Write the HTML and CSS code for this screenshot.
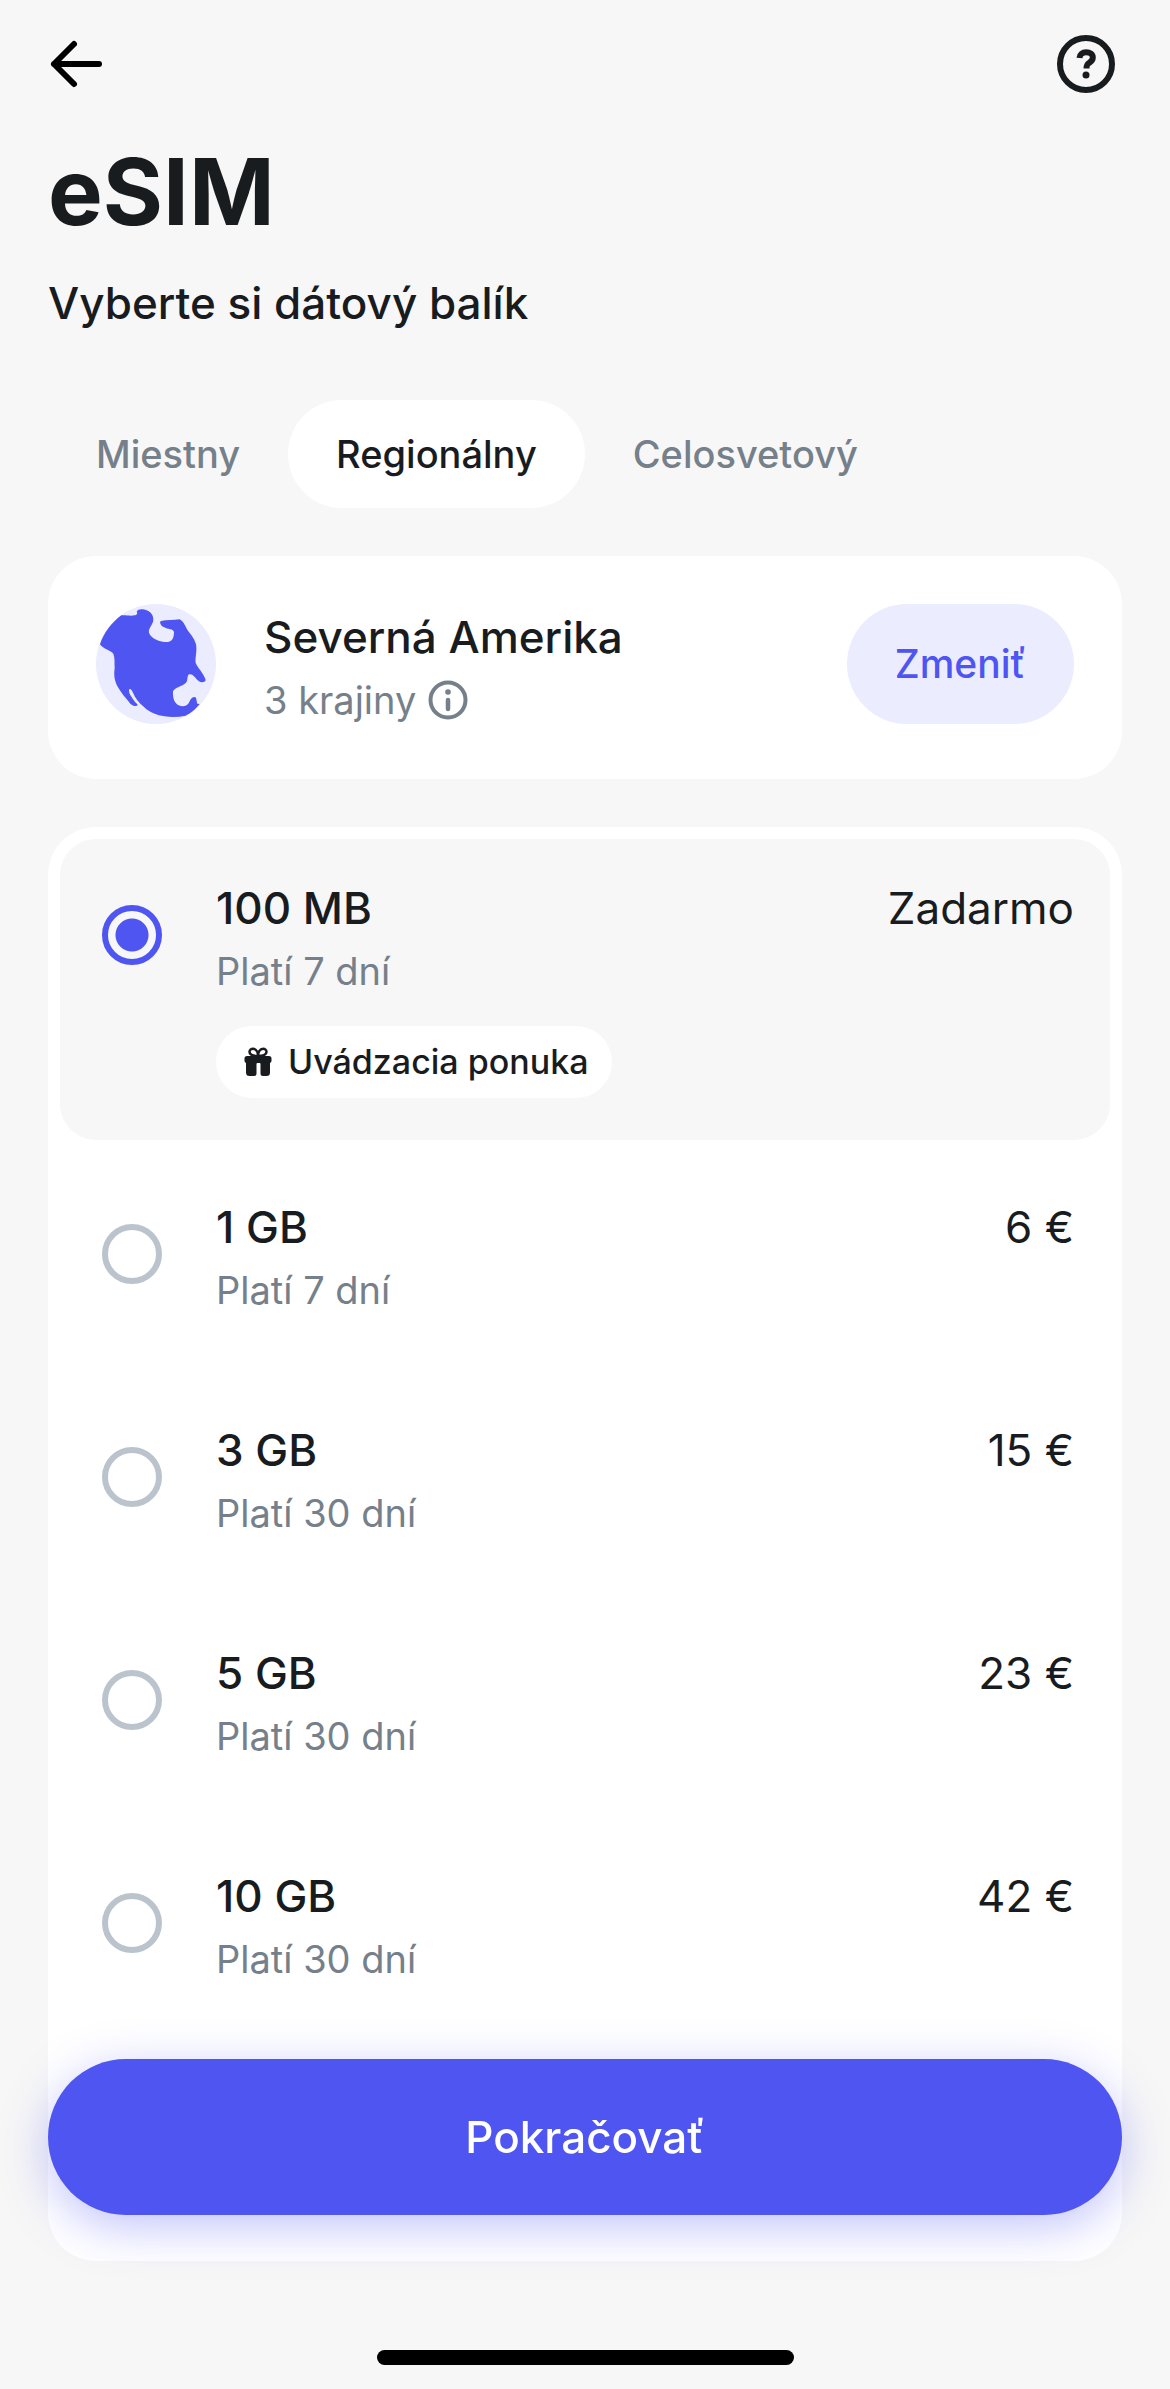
FILE: index.html
```html
<!DOCTYPE html>
<html lang="sk">
<head>
<meta charset="utf-8">
<meta name="viewport" content="width=device-width, initial-scale=1">
<title>eSIM</title>
<link rel="stylesheet" href="styles.css">
</head>
<body>
<main class="page">
  <nav class="topbar">
    <button class="icon-button" type="button" aria-label="Späť">
      <svg width="60" height="60" viewBox="0 0 60 60" fill="none" stroke="#000" stroke-width="6" stroke-linecap="round" stroke-linejoin="round"><path d="M51 30H6M26 10 6 30l20 20"/></svg>
    </button>
    <button class="icon-button" type="button" aria-label="Pomoc">
      <svg width="72" height="60" viewBox="0 0 72 60" fill="none"><circle cx="36" cy="30" r="26" stroke="#191c1f" stroke-width="6"/><path d="M29.500 24C29.700 20.300 32.400 18.300 36.200 18.300c3.900 0 6.600 2 6.600 5.200 0 2.600-1.400 3.900-3.300 5.100-2.200 1.300-3 2.300-3 6" stroke="#191c1f" stroke-width="6"/><circle cx="36" cy="41" r="3.500" fill="#191c1f"/></svg>
    </button>
  </nav>

  <h1 class="heading">eSIM</h1>
  <p class="subtitle">Vyberte si dátový balík</p>

  <div class="tabs" role="tablist">
    <button class="tab" type="button" role="tab" aria-selected="false">Miestny</button>
    <button class="tab tab-active" type="button" role="tab" aria-selected="true">Regionálny</button>
    <button class="tab" type="button" role="tab" aria-selected="false">Celosvetový</button>
  </div>

  <section class="card region">
    <svg class="globe" viewBox="48 42 360 360" aria-hidden="true"><circle cx="228" cy="222" r="180" fill="#ebecfd"/><path fill="#4f55f1" d="M60 163C72 127 95 98 124 76C140 75 152 79 163 76C170 75 174 71 170 66C172 58 181 57 189 58C208 60 221 73 220 90C219 104 204 115 207 128C212 145 239 156 262 156C277 156 282 142 282 127C281 115 263 119 251 111C242 107 237 96 243 93C260 90 280 90 299 88C310 94 314 104 321 118C332 134 342 143 348 163C352 184 345 201 347 219C353 234 370 248 377 270C375 278 363 278 357 274C346 267 342 251 327 253C320 258 325 270 318 278C306 290 285 291 279 304C278 322 281 338 296 346C307 351 319 350 326 340C330 331 335 320 345 321C351 325 349 335 352 341L359 342C344 361 329 371 317 377C297 381 275 382 254 379C231 376 208 367 192 351C176 338 166 324 159 308C155 298 150 294 147 299C146 313 157 322 163 333C168 340 173 341 173 346C168 351 158 347 151 341C138 325 124 310 114 292C103 273 101 256 104 235C103 218 105 204 100 191C90 180 68 176 60 163Z"/></svg>
    <div class="region-text">
      <h2 class="title">Severná Amerika</h2>
      <p class="note region-note">3 krajiny
        <svg width="40" height="40" viewBox="0 0 40 40" fill="none" aria-hidden="true"><circle cx="20" cy="20" r="17.500" stroke="#75808a" stroke-width="4"/><path d="M20 20v9" stroke="#75808a" stroke-width="4.500" stroke-linecap="round"/><circle cx="20" cy="12" r="2.800" fill="#75808a"/></svg>
      </p>
    </div>
    <button class="change" type="button">Zmeniť</button>
  </section>

  <form class="card plans" id="plans">
    <label class="plan plan-selected">
      <input class="radio" type="radio" name="plan" checked>
      <span class="plan-text">
        <span class="title">100 MB</span>
        <span class="note">Platí 7 dní</span>
        <span class="badge">
          <svg width="28" height="30" viewBox="0 0 28 30" aria-hidden="true"><path d="M14 9C9 9 5.500 7.500 5.500 4.800 5.500 3 7 1.800 9 1.800 12 1.800 14 5 14 9Zm0 0c5 0 8.500-1.500 8.500-4.200 0-1.800-1.500-3-3.500-3C16 1.800 14 5 14 9Z" fill="none" stroke="#191c1f" stroke-width="2.500"/><path fill="#191c1f" d="M3 9h22a2.500 2.500 0 0 1 2.500 2.500V14A2.500 2.500 0 0 1 26 16v9.500a3.500 3.500 0 0 1-3.500 3.500H19a2.500 2.500 0 0 1-2.500-2.500V17a1 1 0 0 0-1-1h-2a1 1 0 0 0-1 1v9.500A2.500 2.500 0 0 1 10 29H5.500A3.500 3.500 0 0 1 2 25.500V16a2.500 2.500 0 0 1-1.500-2v-2.500A2.500 2.500 0 0 1 3 9Z"/></svg>
          Uvádzacia ponuka
        </span>
      </span>
      <span class="price">Zadarmo</span>
    </label>
    <label class="plan">
      <input class="radio" type="radio" name="plan">
      <span class="plan-text"><span class="title">1 GB</span><span class="note">Platí 7 dní</span></span>
      <span class="price">6 €</span>
    </label>
    <label class="plan">
      <input class="radio" type="radio" name="plan">
      <span class="plan-text"><span class="title">3 GB</span><span class="note">Platí 30 dní</span></span>
      <span class="price">15 €</span>
    </label>
    <label class="plan">
      <input class="radio" type="radio" name="plan">
      <span class="plan-text"><span class="title">5 GB</span><span class="note">Platí 30 dní</span></span>
      <span class="price">23 €</span>
    </label>
    <label class="plan">
      <input class="radio" type="radio" name="plan">
      <span class="plan-text"><span class="title">10 GB</span><span class="note">Platí 30 dní</span></span>
      <span class="price">42 €</span>
    </label>
  </form>
</main>

<footer class="footer">
  <button class="continue" type="submit" form="plans">Pokračovať</button>
  <div class="home-indicator"></div>
</footer>
</body>
</html>
```
FILE: styles.css
```css
:root {
  --text: #191c1f;
  --muted: #75808a;
  --accent: #4f55f1;
  --accent-soft: #ebecfd;
  --surface: #f7f7f7;
}

* {
  box-sizing: border-box;
  margin: 0;
}

body {
  background: var(--surface);
  color: var(--text);
  font-family: Inter, "Liberation Sans", sans-serif;
  font-size: 44px;
  line-height: 66px;
}

button {
  border: 0;
  padding: 0;
  background: none;
  color: inherit;
  font: inherit;
  cursor: pointer;
}

.page {
  padding: 0 48px 128px;
}

.topbar {
  display: flex;
  align-items: center;
  justify-content: space-between;
  height: 128px;
}

.icon-button {
  display: flex;
}

.heading {
  font-size: 92px;
  font-weight: 700;
  line-height: 128px;
}

.subtitle {
  margin-top: 14px;
  font-weight: 500;
}

.tabs {
  display: flex;
  margin: 64px 0 48px;
}

.tab {
  height: 108px;
  padding: 0 48px;
  border-radius: 54px;
  color: var(--muted);
  font-size: 38px;
  font-weight: 500;
}

.tab-active {
  background: #fff;
  color: var(--text);
}

.card {
  border-radius: 48px;
  background: #fff;
}

.region {
  display: flex;
  align-items: flex-start;
  gap: 48px;
  min-height: 223px;
  margin-bottom: 48px;
  padding: 48px;
}

.globe {
  flex: none;
  width: 120px;
  height: 120px;
}

.region-text {
  flex: 1;
}

.title {
  display: block;
  font-size: 44px;
  font-weight: 500;
  line-height: 66px;
}

.note {
  display: block;
  color: var(--muted);
  font-size: 38px;
  line-height: 60px;
}

.region-note {
  display: flex;
  align-items: center;
  gap: 12px;
}

.change {
  height: 120px;
  padding: 0 48px;
  border-radius: 60px;
  background: var(--accent-soft);
  color: var(--accent);
  font-size: 39px;
  font-weight: 500;
}

.plans {
  padding: 12px 0 223px;
}

.plan {
  display: flex;
  align-items: flex-start;
  min-height: 223px;
  padding: 48px;
}

.plan-selected {
  margin: 0 12px 6px;
  padding: 36px 36px 42px;
  border-radius: 36px;
  background: var(--surface);
}

.radio {
  flex: none;
  width: 60px;
  height: 60px;
  margin: 30px 54px 0 6px;
  border: 6px solid #bbc4cd;
  border-radius: 50%;
  appearance: none;
}

.radio:checked {
  border-color: var(--accent);
  background: radial-gradient(circle, var(--accent) 16px, transparent 17px);
}

.plan-text {
  flex: 1;
}

.badge {
  display: inline-flex;
  align-items: center;
  gap: 16px;
  height: 72px;
  margin-top: 25px;
  padding: 0 24px 0 28px;
  border-radius: 36px;
  background: #fff;
  font-size: 34px;
  font-weight: 500;
  vertical-align: top;
}

.footer {
  position: fixed;
  right: 0;
  bottom: 0;
  left: 0;
  display: flex;
  flex-direction: column;
  align-items: center;
  gap: 135px;
  padding: 0 48px 24px;
}

.continue {
  width: 100%;
  height: 156px;
  border-radius: 78px;
  background: var(--accent);
  box-shadow: 0 12px 48px rgba(79, 85, 241, 0.35);
  color: #fff;
  font-weight: 500;
}

.home-indicator {
  width: 417px;
  height: 15px;
  border-radius: 8px;
  background: #000;
}
```
